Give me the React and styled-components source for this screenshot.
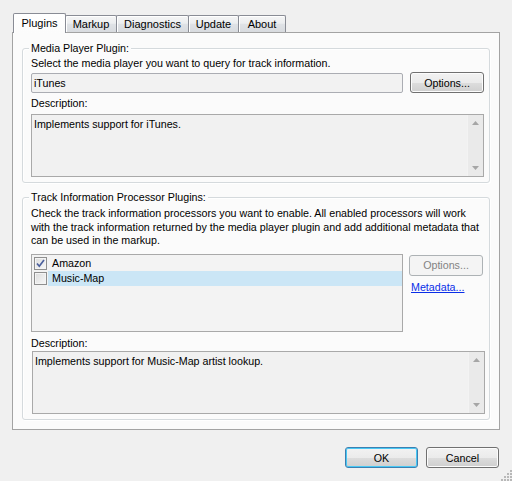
import React from 'react';
import styled, { createGlobalStyle } from 'styled-components';

const Global = createGlobalStyle`
  html, body { margin: 0; padding: 0; background: #f0f0f0; }
  body { font-family: "Liberation Sans", Arial, sans-serif; font-size: 10.7px; color: #000; }
  * { box-sizing: border-box; }
`;

const Window = styled.div`
  position: relative;
  width: 512px;
  height: 481px;
  background: #f0f0f0;
  padding-top: 13px;
  overflow: hidden;
`;

const TabRow = styled.div`
  display: flex;
  align-items: flex-end;
  height: 20px;
  padding-left: 13px;
  position: relative;
  z-index: 1;
`;

const Tab = styled.div`
  position: relative;
  z-index: ${p => (p.$active ? 2 : 1)};
  width: ${p => p.$w}px;
  height: ${p => (p.$active ? 20 : 17)}px;
  margin-bottom: ${p => (p.$active ? 0 : 1)}px;
  margin-left: -1px;
  &:first-child { margin-left: 0; }
  border: 1px solid #898c95;
  border-bottom: none;
  border-radius: 2px 2px 0 0;
  background: ${p =>
    p.$active
      ? 'linear-gradient(#ffffff, #fbfbfb)'
      : 'linear-gradient(#f5f5f5, #eceef0 45%, #dfe2e6 52%, #d8dbdf)'};
  box-shadow: inset 1px 1px 0 #ffffff;
  display: flex;
  align-items: center;
  justify-content: center;
  font-size: 11px;
  line-height: 14px;
  padding-bottom: ${p => (p.$active ? 1 : 0)}px;
`;

const Panel = styled.div`
  margin: -1px 0 0 12px;
  width: 488px;
  height: 398px;
  border: 1px solid #a3a3a3;
  background: #fbfbfb;
  padding: 15px 9px 0 9px;
`;

const Group = styled.div`
  position: relative;
  border: 1px solid #d5dadd;
  border-radius: 3px;
  box-shadow: inset 1px 1px 0 #ffffff, 1px 1px 0 #ffffff;
  padding: ${p => p.$pt}px 5px 5px 8px;
  & + & { margin-top: 14px; }
`;

const Legend = styled.span`
  position: absolute;
  top: -8px;
  left: 6px;
  padding: 0 2px;
  background: #fbfbfb;
  line-height: 14px;
`;

const Label = styled.div`
  line-height: 14px;
  margin-top: ${p => p.$mt || 0}px;
`;

const Paragraph = styled.div`
  line-height: 13.5px;
  white-space: nowrap;
`;

const ComboRow = styled.div`
  display: flex;
  align-items: flex-end;
  gap: 7px;
  margin-top: 2px;
`;

const Combo = styled.div`
  width: 372px;
  height: 20px;
  border: 1px solid #abadb3;
  border-radius: 2px;
  background: #f2f2f2;
  padding-left: 2px;
  line-height: 18px;
`;

const Button = styled.div`
  width: ${p => p.$w || 74}px;
  height: 21px;
  border: 1px solid ${p => (p.$disabled ? '#adb2b5' : p.$default ? '#3c7fb1' : '#707070')};
  border-radius: 3px;
  background: ${p =>
    p.$disabled
      ? '#f4f4f4'
      : 'linear-gradient(#f2f2f2 0%, #ebebeb 50%, #dddddd 51%, #cfcfcf 100%)'};
  box-shadow: ${p =>
    p.$disabled ? 'none' : p.$default ? 'inset 0 0 0 1px #48c8f4' : 'inset 0 0 0 1px #fcfcfc'};
  color: ${p => (p.$disabled ? '#838383' : '#000')};
  display: flex;
  align-items: center;
  justify-content: center;
  line-height: 14px;
  flex-shrink: 0;
`;

const TextBox = styled.div`
  display: flex;
  height: 63px;
  margin-top: ${p => p.$mt || 0}px;
  margin-right: ${p => p.$mr || 0}px;
  margin-left: ${p => p.$ml || 0}px;
  border: 1px solid #a9a9a9;
  background: #f1f1f1;
`;

const TextBody = styled.div`
  flex: 1;
  padding: 2px 2px;
  line-height: 14px;
`;

const ScrollBar = styled.div`
  width: 16px;
  background: #eaeaea;
  border-left: 1px solid #f3f3f3;
  display: flex;
  flex-direction: column;
  justify-content: space-between;
  align-items: center;
  padding: 6px 0;
`;

const ListArea = styled.div`
  display: flex;
  gap: 6px;
  margin-top: 6px;
`;

const List = styled.div`
  width: 372px;
  height: 78px;
  border: 1px solid #a9a9a9;
  background: #f3f3f3;
  padding-top: 1px;
`;

const ListRow = styled.div`
  display: flex;
  align-items: center;
  height: 15px;
  padding-left: 2px;
`;

const Check = styled.div`
  width: 13px;
  height: 13px;
  border: 1px solid #8f8f8f;
  background: linear-gradient(135deg, #dcdcdc, #f8f8f8);
  box-shadow: inset 0 0 0 1px #f4f4f4;
  display: flex;
  align-items: center;
  justify-content: center;
  flex-shrink: 0;
`;

const ItemLabel = styled.div`
  flex: 1;
  height: 15px;
  margin-left: 1px;
  padding-left: 4px;
  line-height: 15px;
  background: ${p => (p.$selected ? '#cbe6f6' : 'transparent')};
`;

const SideColumn = styled.div`
  display: flex;
  flex-direction: column;
  padding-top: 1px;
`;

const Link = styled.a`
  margin-top: 4px;
  padding-left: 2px;
  line-height: 14px;
  color: #0a2ee8;
  text-decoration: underline;
  cursor: pointer;
`;

const Footer = styled.div`
  display: flex;
  justify-content: flex-end;
  gap: 8px;
  padding-right: 13px;
  margin-top: 17px;
`;

const Grip = styled.svg`
  position: absolute;
  right: 0;
  bottom: 0;
`;

const Arrow = ({ up }) => (
  <svg width="7" height="4" viewBox="0 0 7 4">
    <path d={up ? 'M0 4 L3.5 0 L7 4 Z' : 'M0 0 L3.5 4 L7 0 Z'} fill="#a6a6a6" />
  </svg>
);

const ReadOnlyText = ({ children, mt, ml, mr }) => (
  <TextBox $mt={mt} $ml={ml} $mr={mr}>
    <TextBody>{children}</TextBody>
    <ScrollBar>
      <Arrow up />
      <Arrow />
    </ScrollBar>
  </TextBox>
);

const CheckBox = ({ checked }) => (
  <Check>
    {checked && (
      <svg width="11" height="11" viewBox="0 0 11 11">
        <path d="M2 5.5 L4.3 8.2 L9 2" fill="none" stroke="#4b5f9c" strokeWidth="1.7" />
      </svg>
    )}
  </Check>
);

const tabs = [
  { label: 'Plugins', w: 53, active: true },
  { label: 'Markup', w: 52 },
  { label: 'Diagnostics', w: 73 },
  { label: 'Update', w: 51 },
  { label: 'About', w: 48 },
];

export default function App() {
  return (
    <Window>
      <Global />
      <TabRow>
        {tabs.map(t => (
          <Tab key={t.label} $w={t.w} $active={t.active}>{t.label}</Tab>
        ))}
      </TabRow>
      <Panel>
        <Group $pt={7}>
          <Legend>Media Player Plugin:</Legend>
          <Label>Select the media player you want to query for track information.</Label>
          <ComboRow>
            <Combo>iTunes</Combo>
            <Button>Options...</Button>
          </ComboRow>
          <Label $mt={3}>Description:</Label>
          <ReadOnlyText mt={4}>Implements support for iTunes.</ReadOnlyText>
        </Group>
        <Group $pt={9}>
          <Legend>Track Information Processor Plugins:</Legend>
          <Paragraph>
            Check the track information processors you want to enable. All enabled processors will work
            <br />
            with the track information returned by the media player plugin and add additional metadata that
            <br />
            can be used in the markup.
          </Paragraph>
          <ListArea>
            <List>
              <ListRow>
                <CheckBox checked />
                <ItemLabel>Amazon</ItemLabel>
              </ListRow>
              <ListRow>
                <CheckBox />
                <ItemLabel $selected>Music-Map</ItemLabel>
              </ListRow>
            </List>
            <SideColumn>
              <Button $disabled>Options...</Button>
              <Link>Metadata...</Link>
            </SideColumn>
          </ListArea>
          <Label $mt={4}>Description:</Label>
          <ReadOnlyText mt={1} ml={1} mr={-1}>Implements support for Music-Map artist lookup.</ReadOnlyText>
        </Group>
      </Panel>
      <Footer>
        <Button $w={73} $default>OK</Button>
        <Button $w={73}>Cancel</Button>
      </Footer>
      <Grip width="11" height="11" viewBox="0 0 11 11">
        {[[9, 1], [9, 4], [9, 7], [6, 4], [6, 7], [3, 7], [9, 10], [6, 10], [3, 10], [0, 10]].map(([x, y]) => (
          <rect key={`${x}-${y}`} x={x} y={y - 1} width="2" height="2" fill="#b8b8b8" />
        ))}
      </Grip>
    </Window>
  );
}
